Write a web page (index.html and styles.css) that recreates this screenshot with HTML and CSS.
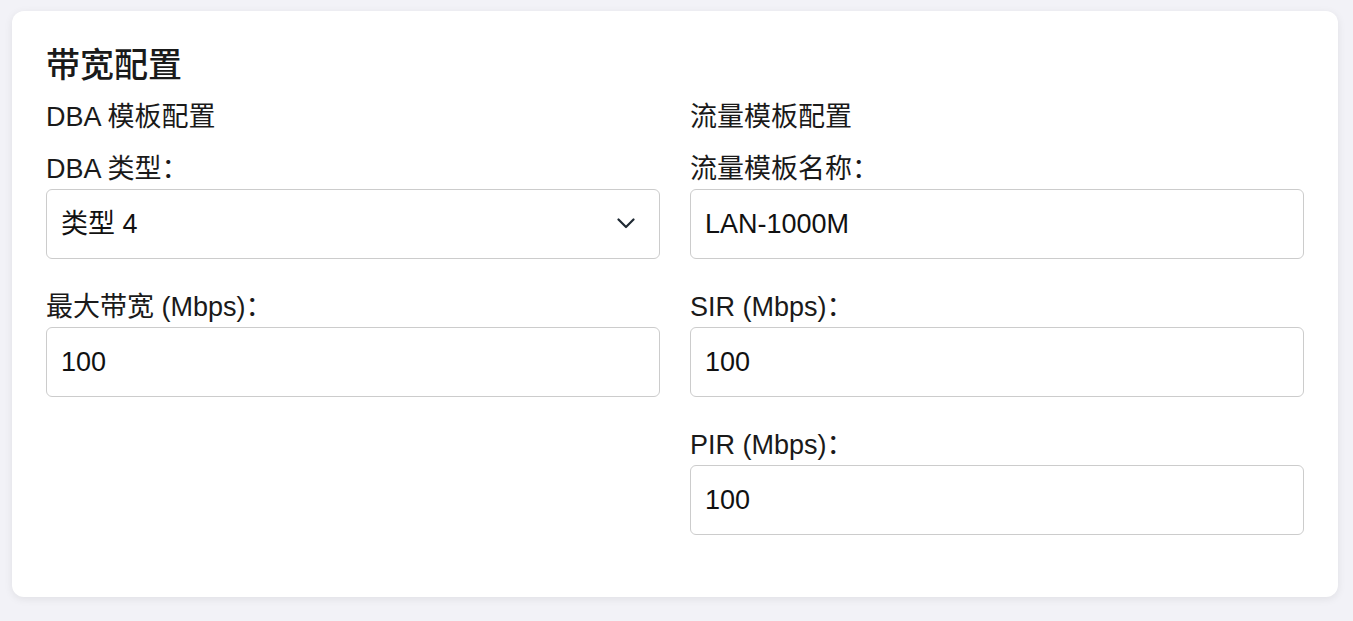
FILE: index.html
```html
<!DOCTYPE html>
<html lang="zh-CN">
<head>
<meta charset="utf-8">
<title>带宽配置</title>
<link rel="stylesheet" href="styles.css">
</head>
<body>
<section class="card">
  <h2 class="card-title">带宽配置</h2>
  <div class="columns">
    <div class="column">
      <h3 class="section-title">DBA 模板配置</h3>
      <div class="field">
        <label class="field-label">DBA 类型：</label>
        <div class="select-wrap">
          <select class="control select">
            <option>类型 4</option>
          </select>
          <svg class="chevron" width="18" height="11" viewBox="0 0 18 11"><path d="M1.5 1.5 L9 9 L16.5 1.5" fill="none" stroke="#1f2933" stroke-width="2.2" stroke-linecap="round" stroke-linejoin="round"/></svg>
        </div>
      </div>
      <div class="field">
        <label class="field-label">最大带宽 (Mbps)：</label>
        <input class="control" type="text" value="100">
      </div>
    </div>
    <div class="column">
      <h3 class="section-title">流量模板配置</h3>
      <div class="field">
        <label class="field-label">流量模板名称：</label>
        <input class="control" type="text" value="LAN-1000M">
      </div>
      <div class="field">
        <label class="field-label">SIR (Mbps)：</label>
        <input class="control" type="text" value="100">
      </div>
      <div class="field">
        <label class="field-label">PIR (Mbps)：</label>
        <input class="control" type="text" value="100">
      </div>
    </div>
  </div>
</section>
</body>
</html>
```

FILE: styles.css
```css
html, body {
  margin: 0;
  padding: 0;
}
body {
  background: #f2f2f7;
  font-family: "Liberation Sans", "Noto Sans CJK SC", sans-serif;
  color: #1a1a1a;
  padding: 11px 15px 24px 12px;
}
.card {
  background: #ffffff;
  border-radius: 12px;
  box-shadow: 0 2px 8px rgba(0, 0, 0, 0.08);
  padding: 34px 34px 31px 34px;
}
.card-title {
  margin: 0 0 16px 0;
  font-size: 34px;
  line-height: 40px;
  font-weight: 500;
}
.columns {
  display: grid;
  grid-template-columns: 1fr 1fr;
  column-gap: 30px;
}
.section-title {
  margin: 0 0 19px 0;
  font-size: 27px;
  line-height: 32px;
  font-weight: 400;
}
.field {
  display: flex;
  flex-direction: column;
  margin-bottom: 31px;
}
.field-label {
  font-size: 27px;
  line-height: 34px;
  margin-bottom: 3px;
}
.control {
  box-sizing: border-box;
  width: 100%;
  height: 70px;
  border: 1px solid #cccccc;
  border-radius: 6px;
  padding: 0 14px;
  font-family: "Liberation Sans", "Noto Sans CJK SC", sans-serif;
  font-size: 27px;
  color: #111111;
  background: #ffffff;
  outline: none;
}
.select-wrap {
  position: relative;
}
.select {
  appearance: none;
  -webkit-appearance: none;
}
.chevron {
  position: absolute;
  right: 25px;
  top: 29px;
  pointer-events: none;
}
```
